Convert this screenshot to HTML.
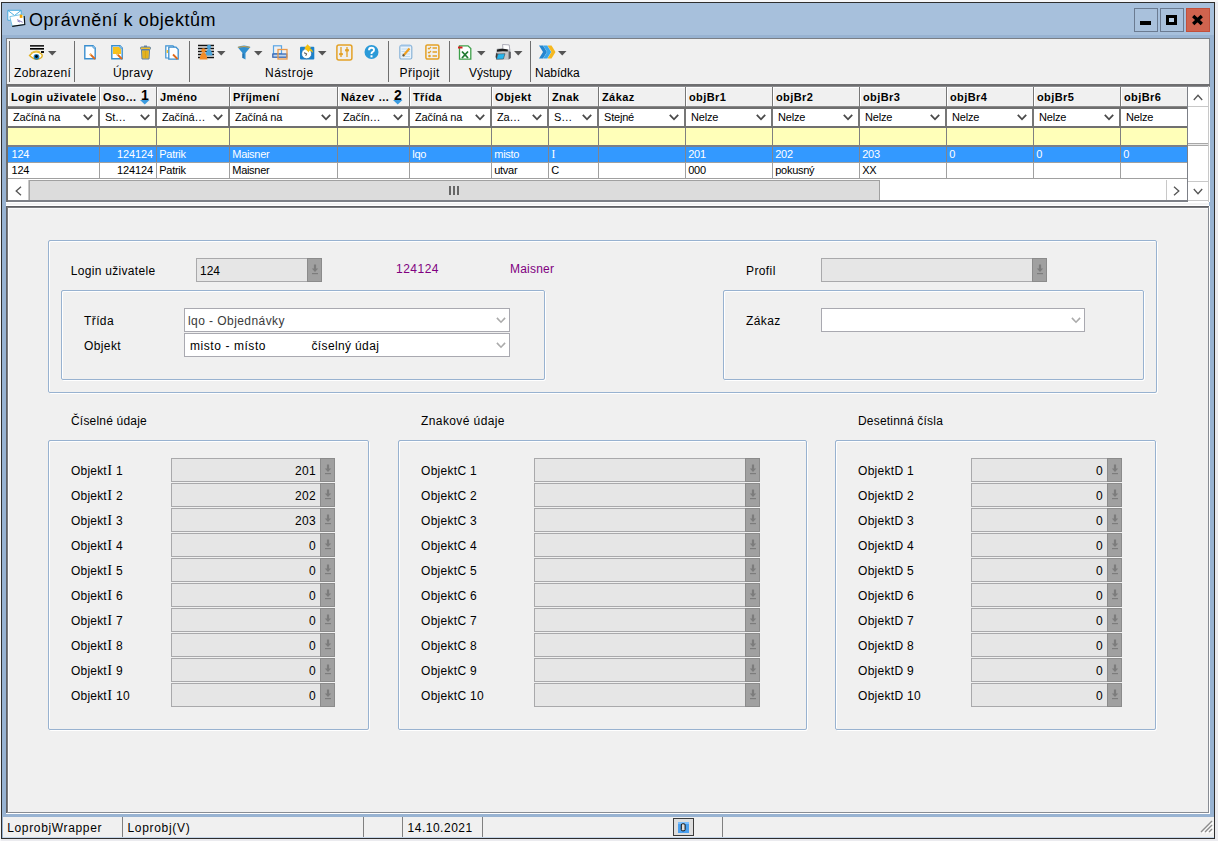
<!DOCTYPE html><html><head><meta charset="utf-8"><style>

*{box-sizing:border-box;margin:0;padding:0}
html,body{width:1218px;height:841px;overflow:hidden;background:#ebebef;font-family:"Liberation Sans",sans-serif;color:#000}
.abs{position:absolute}
.I{font-family:"Liberation Serif",serif;font-size:14.4px;padding:0 0.3px;line-height:0}
.t{position:absolute;white-space:nowrap;line-height:1}
svg{position:absolute;overflow:visible}

</style></head><body>
<div class="abs" style="left:0px;top:0px;width:1218px;height:2px;background:#f6f6f8"></div>
<div class="abs" style="left:0px;top:0px;width:1px;height:841px;background:#f6f6f8"></div>
<div class="abs" style="left:1px;top:2px;width:1214px;height:837px;background:#2e2e2e"></div>
<div class="abs" style="left:2px;top:3px;width:1212px;height:835px;background:#98b3d2"></div>
<div class="abs" style="left:2px;top:3px;width:1212px;height:32px;background:#a7c0dc"></div>
<svg style="left:0px;top:0px" width="30" height="30" viewBox="0 0 30 30">
<path d="M7.8 10.3 H21.2 V20.2 H7.8 Z" fill="#ffffff" stroke="#3aa6dc" stroke-width="0.9"/>
<path d="M8 10.5 L14.5 15.5 L21 10.5" fill="none" stroke="#3aa6dc" stroke-width="0.9"/>
<path d="M9.8 16.6 L23.7 14.1 L24.6 24.4 L12.2 26.2 Z" fill="#ffffff" stroke="#59b6e0" stroke-width="0.8"/>
<path d="M12.2 26.4 L24.8 24.6 L24.2 16" fill="none" stroke="#111" stroke-width="1.1"/>
<rect x="19.8" y="14.7" width="2.6" height="3.2" fill="#f5a400"/>
<path d="M17.2 19.6 L22.6 22.3 M17.5 21 L20 22" stroke="#8a7fc0" stroke-width="1"/>
</svg>
<div class="t" style="left:29px;top:10.76px;font-size:18px;letter-spacing:0.55px;color:#000">Oprávnění k objektům</div>
<div class="abs" style="left:1134px;top:8px;width:24px;height:24px;border:1px solid #6b7b91;background:#a9c1dc"></div>
<div class="abs" style="left:1140px;top:21px;width:11px;height:4px;background:#000"></div>
<div class="abs" style="left:1160px;top:8px;width:24px;height:24px;border:1px solid #6b7b91;background:#a9c1dc"></div>
<div class="abs" style="left:1166px;top:15px;width:11px;height:10px;border:3px solid #000;background:#b9cfe6"></div>
<div class="abs" style="left:1186px;top:8px;width:24px;height:24px;border:1px solid #c24f3b;background:#d0634e"></div>
<svg style="left:1192px;top:15px" width="11" height="10" viewBox="0 0 11 10">
<path d="M1.2 1 L9.8 9 M9.8 1 L1.2 9" stroke="#000" stroke-width="3.3" stroke-linecap="butt"/></svg>
<div class="abs" style="left:6px;top:38px;width:1204px;height:47px;background:#f0f0f0;border-left:1px solid #7a7f86;border-top:1px solid #7a7f86;border-right:1px solid #80858c"></div>
<div class="abs" style="left:6px;top:84px;width:1204px;height:2px;background:#6e6e70"></div>
<div class="abs" style="left:6px;top:86px;width:1204px;height:1px;background:#8a8b8e"></div>
<div class="abs" style="left:9px;top:41px;width:1px;height:41px;background:#6f6f6f"></div>
<div class="abs" style="left:74px;top:41px;width:1px;height:41px;background:#6f6f6f"></div>
<div class="abs" style="left:189px;top:41px;width:1px;height:41px;background:#6f6f6f"></div>
<div class="abs" style="left:388px;top:41px;width:1px;height:41px;background:#6f6f6f"></div>
<div class="abs" style="left:449px;top:41px;width:1px;height:41px;background:#6f6f6f"></div>
<div class="abs" style="left:530px;top:41px;width:1px;height:41px;background:#6f6f6f"></div>
<div class="t" style="left:14px;top:66.84px;font-size:12px;color:#000;letter-spacing:0.35px">Zobrazení</div>
<div class="t" style="left:113px;top:66.84px;font-size:12px;color:#000;letter-spacing:0.35px">Úpravy</div>
<div class="t" style="left:265px;top:66.84px;font-size:12px;color:#000;letter-spacing:0.5px">Nástroje</div>
<div class="t" style="left:399.5px;top:66.84px;font-size:12px;color:#000;letter-spacing:0.45px">Připojit</div>
<div class="t" style="left:469px;top:66.84px;font-size:12px;color:#000;letter-spacing:0px">Výstupy</div>
<div class="t" style="left:535px;top:66.84px;font-size:12px;color:#000;letter-spacing:0px">Nabídka</div>
<svg style="left:29px;top:44px" width="16" height="17" viewBox="0 0 16 17">
<rect x="1" y="1" width="14" height="1.7" fill="#222"/><rect x="1" y="4" width="14" height="1.6" fill="#000"/>
<rect x="12" y="7" width="3" height="2" fill="#111"/>
<path d="M0.5 11.5 Q6 5 12.5 10 Q14 11.5 12.5 13.5 Q7 18 0.5 11.5 Z" fill="#fff" stroke="#e0b020" stroke-width="1.3"/>
<path d="M2 9 Q7 6 11 8" fill="none" stroke="#e8c040" stroke-width="1.2"/>
<circle cx="7.5" cy="12.8" r="2.9" fill="#1f7fb8"/><circle cx="7.5" cy="12.5" r="1.4" fill="#000"/>
</svg>
<svg style="left:48px;top:51px" width="9" height="5" viewBox="0 0 9 5"><path d="M0 0 H8.5 L4.25 4.5 Z" fill="#555"/></svg>
<svg style="left:84px;top:45px" width="13" height="15" viewBox="0 0 13 15">
<path d="M0.8 0.8 H9 L11.2 3 V13.8 H0.8 Z" fill="#fff" stroke="#3a8fd0" stroke-width="1.4"/>
<path d="M9 0.8 V3 H11.2" fill="#d8ecfa" stroke="#3a8fd0" stroke-width="0.8"/>
<path d="M6 9 L11 14" stroke="#e06a1a" stroke-width="1.8"/><path d="M5.8 8.8 L7 10" stroke="#f7c070" stroke-width="1.8"/>
</svg>
<svg style="left:111px;top:45px" width="13" height="15" viewBox="0 0 13 15">
<path d="M0.8 0.8 H9 L11.2 3 V13.8 H0.8 Z" fill="#fff" stroke="#3a8fd0" stroke-width="1.4"/><path d="M2 2 H8 L10 4 V9 H2 Z" fill="#f7c21e"/>
<path d="M9 0.8 V3 H11.2" fill="#d8ecfa" stroke="#3a8fd0" stroke-width="0.8"/>
<path d="M6 9 L11 14" stroke="#e06a1a" stroke-width="1.8"/><path d="M5.8 8.8 L7 10" stroke="#f7c070" stroke-width="1.8"/>
</svg>
<svg style="left:140px;top:45px" width="11" height="15" viewBox="0 0 11 15">
<rect x="4" y="0.5" width="3" height="2" fill="#6a86a6"/>
<rect x="0.5" y="2" width="10" height="2.5" rx="1" fill="#f2c02a" stroke="#5a7ea6" stroke-width="1"/>
<path d="M1.5 5 H9.5 L9 14 H2 Z" fill="#f2c02a" stroke="#5a7ea6" stroke-width="1"/>
<path d="M4 6 V13 M5.5 6 V13 M7 6 V13" stroke="#c99a10" stroke-width="0.7"/>
</svg>
<svg style="left:165px;top:45px" width="14" height="15" viewBox="0 0 14 15">
<path d="M0.8 0.8 H8 L9 2 V13 H0.8 Z" fill="#fff" stroke="#3a8fd0" stroke-width="1.2"/>
<rect x="1.6" y="5" width="1.5" height="3" fill="#f5c030"/>
<path d="M3.8 2.2 H11 L13.2 4.4 V14.2 H3.8 Z" fill="#fff" stroke="#3a8fd0" stroke-width="1.3"/>
<path d="M8 9.5 L12.5 14" stroke="#e06a1a" stroke-width="1.8"/>
</svg>
<svg style="left:198px;top:44px" width="17" height="16" viewBox="0 0 17 16">
<path d="M0 1.5 H16 M0 4.5 H16 M0 7.5 H16 M0 10.5 H16 M0 13.5 H16" stroke="#111" stroke-width="1.3"/>
<circle cx="11" cy="3" r="2.2" fill="#4aa4dc"/><path d="M7.5 11.5 Q8.5 5 11 5 Q13.5 5 14.5 11.5 Z" fill="#4aa4dc"/>
<circle cx="5.5" cy="6.5" r="2.2" fill="#f28c28"/><path d="M1.5 15.5 Q2.5 8.5 5.5 8.5 Q8.5 8.5 9.5 15.5 Z" fill="#f28c28"/>
</svg>
<svg style="left:217px;top:51px" width="9" height="5" viewBox="0 0 9 5"><path d="M0 0 H8.5 L4.25 4.5 Z" fill="#555"/></svg>
<svg style="left:237px;top:45px" width="14" height="15" viewBox="0 0 14 15">
<path d="M0.5 2 Q7 -1 13.5 2 L8.5 8 V14.5 L5.5 13 V8 Z" fill="#2f8fd0"/>
<path d="M1 2.3 Q7 0.8 13 2.3" stroke="#d8a040" stroke-width="1" fill="none"/>
<path d="M6 8.5 V13" stroke="#1a5f9a" stroke-width="1"/>
</svg>
<svg style="left:254px;top:51px" width="9" height="5" viewBox="0 0 9 5"><path d="M0 0 H8.5 L4.25 4.5 Z" fill="#555"/></svg>
<svg style="left:272px;top:45px" width="16" height="15" viewBox="0 0 16 15">
<rect x="1.5" y="0.8" width="8" height="8" fill="none" stroke="#5aa6e6" stroke-width="1.2"/>
<rect x="0.8" y="9" width="14" height="3.2" fill="#bcd6f0" stroke="#2f5fb0" stroke-width="1.2"/>
<rect x="6" y="4.5" width="9" height="9.5" fill="none" stroke="#ea9a4a" stroke-width="1.3"/>
</svg>
<svg style="left:300px;top:44px" width="15" height="16" viewBox="0 0 15 16">
<rect x="0" y="2.8" width="14.3" height="12.8" rx="1" fill="#1c82cc"/>
<circle cx="6.6" cy="9.7" r="5" fill="#ffffff"/><circle cx="6.6" cy="9.7" r="5" fill="none" stroke="#0d5f9e" stroke-width="0.6"/>
<path d="M6.6 9.7 L4 8.8 M6.6 9.7 L5.8 11.8" stroke="#333" stroke-width="0.9"/>
<path d="M7.5 0.2 L11.2 4 H9.4 Q12.6 5 13 8.8 Q11.2 6.6 9 6.4 V8.6 L4.4 4.3 Z" fill="#f7c10e"/>
</svg>
<svg style="left:318px;top:51px" width="9" height="5" viewBox="0 0 9 5"><path d="M0 0 H8.5 L4.25 4.5 Z" fill="#555"/></svg>
<svg style="left:336px;top:44px" width="17" height="17" viewBox="0 0 17 17">
<rect x="0.9" y="0.9" width="15" height="15" rx="2" fill="none" stroke="#e3a126" stroke-width="1.5"/>
<path d="M5 3 V13 M11 3 V13" stroke="#e3a126" stroke-width="1.3"/>
<rect x="3" y="9" width="4" height="2.2" rx="1" fill="#e3a126"/><rect x="9" y="5" width="4" height="2.6" rx="1" fill="#e3a126"/>
</svg>
<svg style="left:364px;top:45px" width="15" height="15" viewBox="0 0 15 15">
<circle cx="7.5" cy="7" r="7" fill="#2b9ad8"/>
<path d="M5 5.3 Q5 2.8 7.5 2.8 Q10 2.8 10 5 Q10 6.5 8.3 7.2 Q7.5 7.6 7.5 9" fill="none" stroke="#fff" stroke-width="1.9"/>
<rect x="6.5" y="10.3" width="2" height="2" fill="#fff"/>
</svg>
<svg style="left:399px;top:44px" width="14" height="16" viewBox="0 0 14 16">
<rect x="0.8" y="1.5" width="12" height="13.5" rx="1.5" fill="#eaf3fb" stroke="#8ab4d8" stroke-width="1.2"/>
<path d="M2.5 5 H11 M2.5 7.5 H11 M2.5 10 H11 M2.5 12.5 H11" stroke="#b8d4ec" stroke-width="0.8"/>
<rect x="2" y="0.5" width="9.5" height="2" fill="#9cc2e6"/>
<path d="M4 12 L10.5 4.5" stroke="#f0a020" stroke-width="2.2"/><path d="M4 12 L5 10.5" stroke="#555" stroke-width="2"/>
</svg>
<svg style="left:425px;top:44px" width="15" height="16" viewBox="0 0 15 16">
<rect x="0.9" y="0.9" width="13" height="14.2" rx="1.5" fill="none" stroke="#e3a126" stroke-width="1.5"/>
<path d="M3 4 L4 5 L6 3 M3 8 L4 9 L6 7" stroke="#e3a126" stroke-width="1.1" fill="none"/>
<path d="M7.5 4 H12 M7.5 8 H12 M7.5 12 H12" stroke="#e3a126" stroke-width="1.4"/><circle cx="4.5" cy="12" r="1.3" fill="#e3a126"/>
</svg>
<svg style="left:458px;top:45px" width="14" height="15" viewBox="0 0 14 15">
<path d="M1.5 0.8 H10 L12.8 3.5 V14.2 H1.5 Z" fill="#fff" stroke="#3ea04a" stroke-width="1.3"/>
<rect x="0" y="1.5" width="4.5" height="2" fill="#d42020"/>
<path d="M4 6.5 L10 13 M10 6.5 L4 13" stroke="#1f7a30" stroke-width="1.8"/>
</svg>
<svg style="left:477px;top:51px" width="9" height="5" viewBox="0 0 9 5"><path d="M0 0 H8.5 L4.25 4.5 Z" fill="#555"/></svg>
<svg style="left:495px;top:44px" width="17" height="16" viewBox="0 0 17 16">
<path d="M1 6.5 Q1 4.6 3 4.3 L12.5 4 Q15.6 4.4 15.8 8 V13.5 Q15.6 15.6 13 15.7 H3 Q0.5 15.5 0.5 13 Z" fill="#c4c6c9"/>
<path d="M7.6 0.5 L14.2 0.9 L14.8 6 L8 6 Z" fill="#ffffff" stroke="#9a9aa8" stroke-width="0.8"/>
<path d="M2 5.6 Q7 4.2 12.8 5.4 L12.8 7.6 Q7 6.6 2 7.8 Z" fill="#1e1e1e"/>
<path d="M13.6 7 L15.8 8 V14 L13.6 15.6 Z" fill="#5a5c60"/>
<path d="M1.2 9 L3 9.8 L1.6 15.4 L0.6 13 Z" fill="#3a3a3a"/>
<path d="M3 9.9 L10 9.7 L8.4 15 L1.4 15.3 Z" fill="#27b6ee" stroke="#3a3a3a" stroke-width="0.5"/>
</svg>
<svg style="left:514px;top:51px" width="9" height="5" viewBox="0 0 9 5"><path d="M0 0 H8.5 L4.25 4.5 Z" fill="#555"/></svg>
<svg style="left:539px;top:45px" width="17" height="14" viewBox="0 0 17 14">
<path d="M8.5 0.5 H12.5 L16.5 7 L12.5 13.5 H8.5 L12.5 7 Z" fill="#f5b820"/>
<path d="M4.2 0.5 H8.2 L12.2 7 L8.2 13.5 H4.2 L8.2 7 Z" fill="#3aa6ea"/>
<path d="M0 0.5 H4 L8 7 L4 13.5 H0 L4 7 Z" fill="#2586d0"/>
</svg>
<svg style="left:558px;top:51px" width="9" height="5" viewBox="0 0 9 5"><path d="M0 0 H8.5 L4.25 4.5 Z" fill="#555"/></svg>
<div class="abs" style="left:6px;top:87px;width:1204px;height:115px;background:#ffffff"></div>
<div class="abs" style="left:6px;top:86px;width:2px;height:116px;background:#6d6d6d"></div>
<div class="abs" style="left:8px;top:87px;width:1180px;height:1px;background:#ffffff"></div>
<div class="abs" style="left:8px;top:88px;width:1180px;height:18px;background:#f0f0f0"></div>
<div class="abs" style="left:8px;top:106px;width:1180px;height:1px;background:#8a8a8a"></div>
<div class="abs" style="left:8px;top:107px;width:1180px;height:2px;background:#6e6e6e"></div>
<div class="abs" style="left:99px;top:87px;width:1px;height:20px;background:#777"></div>
<div class="abs" style="left:8px;top:87px;width:1px;height:19px;background:#fff"></div>
<div class="t" style="left:11px;top:91.69px;font-size:11px;font-weight:bold;letter-spacing:0.4px">Login uživatele</div>
<div class="abs" style="left:156px;top:87px;width:1px;height:20px;background:#777"></div>
<div class="abs" style="left:100px;top:87px;width:1px;height:19px;background:#fff"></div>
<div class="t" style="left:103px;top:91.69px;font-size:11px;font-weight:bold;letter-spacing:0.4px">Oso…</div>
<div class="abs" style="left:229px;top:87px;width:1px;height:20px;background:#777"></div>
<div class="abs" style="left:157px;top:87px;width:1px;height:19px;background:#fff"></div>
<div class="t" style="left:160px;top:91.69px;font-size:11px;font-weight:bold;letter-spacing:0.4px">Jméno</div>
<div class="abs" style="left:337px;top:87px;width:1px;height:20px;background:#777"></div>
<div class="abs" style="left:230px;top:87px;width:1px;height:19px;background:#fff"></div>
<div class="t" style="left:233px;top:91.69px;font-size:11px;font-weight:bold;letter-spacing:0.4px">Příjmení</div>
<div class="abs" style="left:409px;top:87px;width:1px;height:20px;background:#777"></div>
<div class="abs" style="left:338px;top:87px;width:1px;height:19px;background:#fff"></div>
<div class="t" style="left:341px;top:91.69px;font-size:11px;font-weight:bold;letter-spacing:0.4px">Název …</div>
<div class="abs" style="left:491px;top:87px;width:1px;height:20px;background:#777"></div>
<div class="abs" style="left:410px;top:87px;width:1px;height:19px;background:#fff"></div>
<div class="t" style="left:413px;top:91.69px;font-size:11px;font-weight:bold;letter-spacing:0.4px">Třída</div>
<div class="abs" style="left:548px;top:87px;width:1px;height:20px;background:#777"></div>
<div class="abs" style="left:492px;top:87px;width:1px;height:19px;background:#fff"></div>
<div class="t" style="left:495px;top:91.69px;font-size:11px;font-weight:bold;letter-spacing:0.4px">Objekt</div>
<div class="abs" style="left:598px;top:87px;width:1px;height:20px;background:#777"></div>
<div class="abs" style="left:549px;top:87px;width:1px;height:19px;background:#fff"></div>
<div class="t" style="left:552px;top:91.69px;font-size:11px;font-weight:bold;letter-spacing:0.4px">Znak</div>
<div class="abs" style="left:685px;top:87px;width:1px;height:20px;background:#777"></div>
<div class="abs" style="left:599px;top:87px;width:1px;height:19px;background:#fff"></div>
<div class="t" style="left:602px;top:91.69px;font-size:11px;font-weight:bold;letter-spacing:0.4px">Zákaz</div>
<div class="abs" style="left:772px;top:87px;width:1px;height:20px;background:#777"></div>
<div class="abs" style="left:686px;top:87px;width:1px;height:19px;background:#fff"></div>
<div class="t" style="left:689px;top:91.69px;font-size:11px;font-weight:bold;letter-spacing:0.4px">objBr1</div>
<div class="abs" style="left:859px;top:87px;width:1px;height:20px;background:#777"></div>
<div class="abs" style="left:773px;top:87px;width:1px;height:19px;background:#fff"></div>
<div class="t" style="left:776px;top:91.69px;font-size:11px;font-weight:bold;letter-spacing:0.4px">objBr2</div>
<div class="abs" style="left:946px;top:87px;width:1px;height:20px;background:#777"></div>
<div class="abs" style="left:860px;top:87px;width:1px;height:19px;background:#fff"></div>
<div class="t" style="left:863px;top:91.69px;font-size:11px;font-weight:bold;letter-spacing:0.4px">objBr3</div>
<div class="abs" style="left:1033px;top:87px;width:1px;height:20px;background:#777"></div>
<div class="abs" style="left:947px;top:87px;width:1px;height:19px;background:#fff"></div>
<div class="t" style="left:950px;top:91.69px;font-size:11px;font-weight:bold;letter-spacing:0.4px">objBr4</div>
<div class="abs" style="left:1120px;top:87px;width:1px;height:20px;background:#777"></div>
<div class="abs" style="left:1034px;top:87px;width:1px;height:19px;background:#fff"></div>
<div class="t" style="left:1037px;top:91.69px;font-size:11px;font-weight:bold;letter-spacing:0.4px">objBr5</div>
<div class="abs" style="left:1187px;top:87px;width:1px;height:20px;background:#777"></div>
<div class="abs" style="left:1121px;top:87px;width:1px;height:19px;background:#fff"></div>
<div class="t" style="left:1124px;top:91.69px;font-size:11px;font-weight:bold;letter-spacing:0.4px">objBr6</div>
<div class="t" style="left:141px;top:88.15px;font-size:14px;font-weight:bold;">1</div>
<svg style="left:140px;top:100px" width="10" height="5" viewBox="0 0 10 5"><path d="M0 0 H9.5 L4.75 4.5 Z" fill="#3a9be0"/></svg>
<div class="t" style="left:394px;top:88.15px;font-size:14px;font-weight:bold;">2</div>
<svg style="left:393px;top:100px" width="10" height="5" viewBox="0 0 10 5"><path d="M0 0 H9.5 L4.75 4.5 Z" fill="#3a9be0"/></svg>
<div class="abs" style="left:8px;top:109px;width:1180px;height:17px;background:#fff"></div>
<div class="abs" style="left:8px;top:126px;width:1180px;height:2px;background:#707070"></div>
<div class="abs" style="left:98px;top:109px;width:2px;height:17px;background:#777"></div>
<div class="t" style="left:13px;top:111.69px;font-size:11px;letter-spacing:-0.2px;color:#000">Začíná na</div>
<svg style="left:83px;top:114px" width="10" height="7" viewBox="0 0 10 7"><path d="M0.8 0.8 L5 5.3 L9.2 0.8" fill="none" stroke="#4a4a4a" stroke-width="1.8"/></svg>
<div class="abs" style="left:155px;top:109px;width:2px;height:17px;background:#777"></div>
<div class="t" style="left:105px;top:111.69px;font-size:11px;letter-spacing:-0.2px;color:#000">St…</div>
<svg style="left:140px;top:114px" width="10" height="7" viewBox="0 0 10 7"><path d="M0.8 0.8 L5 5.3 L9.2 0.8" fill="none" stroke="#4a4a4a" stroke-width="1.8"/></svg>
<div class="abs" style="left:228px;top:109px;width:2px;height:17px;background:#777"></div>
<div class="t" style="left:162px;top:111.69px;font-size:11px;letter-spacing:-0.2px;color:#000">Začíná…</div>
<svg style="left:213px;top:114px" width="10" height="7" viewBox="0 0 10 7"><path d="M0.8 0.8 L5 5.3 L9.2 0.8" fill="none" stroke="#4a4a4a" stroke-width="1.8"/></svg>
<div class="abs" style="left:336px;top:109px;width:2px;height:17px;background:#777"></div>
<div class="t" style="left:235px;top:111.69px;font-size:11px;letter-spacing:-0.2px;color:#000">Začíná na</div>
<svg style="left:321px;top:114px" width="10" height="7" viewBox="0 0 10 7"><path d="M0.8 0.8 L5 5.3 L9.2 0.8" fill="none" stroke="#4a4a4a" stroke-width="1.8"/></svg>
<div class="abs" style="left:408px;top:109px;width:2px;height:17px;background:#777"></div>
<div class="t" style="left:343px;top:111.69px;font-size:11px;letter-spacing:-0.2px;color:#000">Začín…</div>
<svg style="left:393px;top:114px" width="10" height="7" viewBox="0 0 10 7"><path d="M0.8 0.8 L5 5.3 L9.2 0.8" fill="none" stroke="#4a4a4a" stroke-width="1.8"/></svg>
<div class="abs" style="left:490px;top:109px;width:2px;height:17px;background:#777"></div>
<div class="t" style="left:415px;top:111.69px;font-size:11px;letter-spacing:-0.2px;color:#000">Začíná na</div>
<svg style="left:475px;top:114px" width="10" height="7" viewBox="0 0 10 7"><path d="M0.8 0.8 L5 5.3 L9.2 0.8" fill="none" stroke="#4a4a4a" stroke-width="1.8"/></svg>
<div class="abs" style="left:547px;top:109px;width:2px;height:17px;background:#777"></div>
<div class="t" style="left:497px;top:111.69px;font-size:11px;letter-spacing:-0.2px;color:#000">Za…</div>
<svg style="left:532px;top:114px" width="10" height="7" viewBox="0 0 10 7"><path d="M0.8 0.8 L5 5.3 L9.2 0.8" fill="none" stroke="#4a4a4a" stroke-width="1.8"/></svg>
<div class="abs" style="left:597px;top:109px;width:2px;height:17px;background:#777"></div>
<div class="t" style="left:554px;top:111.69px;font-size:11px;letter-spacing:-0.2px;color:#000">S…</div>
<svg style="left:582px;top:114px" width="10" height="7" viewBox="0 0 10 7"><path d="M0.8 0.8 L5 5.3 L9.2 0.8" fill="none" stroke="#4a4a4a" stroke-width="1.8"/></svg>
<div class="abs" style="left:684px;top:109px;width:2px;height:17px;background:#777"></div>
<div class="t" style="left:604px;top:111.69px;font-size:11px;letter-spacing:-0.2px;color:#000">Stejné</div>
<svg style="left:669px;top:114px" width="10" height="7" viewBox="0 0 10 7"><path d="M0.8 0.8 L5 5.3 L9.2 0.8" fill="none" stroke="#4a4a4a" stroke-width="1.8"/></svg>
<div class="abs" style="left:771px;top:109px;width:2px;height:17px;background:#777"></div>
<div class="t" style="left:691px;top:111.69px;font-size:11px;letter-spacing:-0.2px;color:#000">Nelze</div>
<svg style="left:756px;top:114px" width="10" height="7" viewBox="0 0 10 7"><path d="M0.8 0.8 L5 5.3 L9.2 0.8" fill="none" stroke="#4a4a4a" stroke-width="1.8"/></svg>
<div class="abs" style="left:858px;top:109px;width:2px;height:17px;background:#777"></div>
<div class="t" style="left:778px;top:111.69px;font-size:11px;letter-spacing:-0.2px;color:#000">Nelze</div>
<svg style="left:843px;top:114px" width="10" height="7" viewBox="0 0 10 7"><path d="M0.8 0.8 L5 5.3 L9.2 0.8" fill="none" stroke="#4a4a4a" stroke-width="1.8"/></svg>
<div class="abs" style="left:945px;top:109px;width:2px;height:17px;background:#777"></div>
<div class="t" style="left:865px;top:111.69px;font-size:11px;letter-spacing:-0.2px;color:#000">Nelze</div>
<svg style="left:930px;top:114px" width="10" height="7" viewBox="0 0 10 7"><path d="M0.8 0.8 L5 5.3 L9.2 0.8" fill="none" stroke="#4a4a4a" stroke-width="1.8"/></svg>
<div class="abs" style="left:1032px;top:109px;width:2px;height:17px;background:#777"></div>
<div class="t" style="left:952px;top:111.69px;font-size:11px;letter-spacing:-0.2px;color:#000">Nelze</div>
<svg style="left:1017px;top:114px" width="10" height="7" viewBox="0 0 10 7"><path d="M0.8 0.8 L5 5.3 L9.2 0.8" fill="none" stroke="#4a4a4a" stroke-width="1.8"/></svg>
<div class="abs" style="left:1119px;top:109px;width:2px;height:17px;background:#777"></div>
<div class="t" style="left:1039px;top:111.69px;font-size:11px;letter-spacing:-0.2px;color:#000">Nelze</div>
<svg style="left:1104px;top:114px" width="10" height="7" viewBox="0 0 10 7"><path d="M0.8 0.8 L5 5.3 L9.2 0.8" fill="none" stroke="#4a4a4a" stroke-width="1.8"/></svg>
<div class="abs" style="left:1187px;top:109px;width:2px;height:17px;background:#777"></div>
<div class="t" style="left:1126px;top:111.69px;font-size:11px;letter-spacing:-0.2px;color:#000">Nelze</div>
<div class="abs" style="left:8px;top:128px;width:1180px;height:17px;background:#ffffb9"></div>
<div class="abs" style="left:8px;top:145px;width:1180px;height:2px;background:#7b7f88"></div>
<div class="abs" style="left:99px;top:128px;width:1px;height:17px;background:#808080"></div>
<div class="abs" style="left:156px;top:128px;width:1px;height:17px;background:#808080"></div>
<div class="abs" style="left:229px;top:128px;width:1px;height:17px;background:#808080"></div>
<div class="abs" style="left:337px;top:128px;width:1px;height:17px;background:#808080"></div>
<div class="abs" style="left:409px;top:128px;width:1px;height:17px;background:#808080"></div>
<div class="abs" style="left:491px;top:128px;width:1px;height:17px;background:#808080"></div>
<div class="abs" style="left:548px;top:128px;width:1px;height:17px;background:#808080"></div>
<div class="abs" style="left:598px;top:128px;width:1px;height:17px;background:#808080"></div>
<div class="abs" style="left:685px;top:128px;width:1px;height:17px;background:#808080"></div>
<div class="abs" style="left:772px;top:128px;width:1px;height:17px;background:#808080"></div>
<div class="abs" style="left:859px;top:128px;width:1px;height:17px;background:#808080"></div>
<div class="abs" style="left:946px;top:128px;width:1px;height:17px;background:#808080"></div>
<div class="abs" style="left:1033px;top:128px;width:1px;height:17px;background:#808080"></div>
<div class="abs" style="left:1120px;top:128px;width:1px;height:17px;background:#808080"></div>
<div class="abs" style="left:1187px;top:128px;width:1px;height:17px;background:#808080"></div>
<div class="abs" style="left:8px;top:147px;width:1180px;height:15px;background:#3399ff"></div>
<div class="abs" style="left:8px;top:162px;width:1180px;height:1px;background:#a0a0a0"></div>
<div class="abs" style="left:99px;top:147px;width:1px;height:15px;background:#7d8590"></div>
<div class="abs" style="left:156px;top:147px;width:1px;height:15px;background:#7d8590"></div>
<div class="abs" style="left:229px;top:147px;width:1px;height:15px;background:#7d8590"></div>
<div class="abs" style="left:337px;top:147px;width:1px;height:15px;background:#7d8590"></div>
<div class="abs" style="left:409px;top:147px;width:1px;height:15px;background:#7d8590"></div>
<div class="abs" style="left:491px;top:147px;width:1px;height:15px;background:#7d8590"></div>
<div class="abs" style="left:548px;top:147px;width:1px;height:15px;background:#7d8590"></div>
<div class="abs" style="left:598px;top:147px;width:1px;height:15px;background:#7d8590"></div>
<div class="abs" style="left:685px;top:147px;width:1px;height:15px;background:#7d8590"></div>
<div class="abs" style="left:772px;top:147px;width:1px;height:15px;background:#7d8590"></div>
<div class="abs" style="left:859px;top:147px;width:1px;height:15px;background:#7d8590"></div>
<div class="abs" style="left:946px;top:147px;width:1px;height:15px;background:#7d8590"></div>
<div class="abs" style="left:1033px;top:147px;width:1px;height:15px;background:#7d8590"></div>
<div class="abs" style="left:1120px;top:147px;width:1px;height:15px;background:#7d8590"></div>
<div class="abs" style="left:1187px;top:147px;width:1px;height:15px;background:#7d8590"></div>
<div class="abs" style="left:8px;top:178px;width:1180px;height:1px;background:#a0a0a0"></div>
<div class="abs" style="left:99px;top:163px;width:1px;height:15px;background:#a0a0a0"></div>
<div class="abs" style="left:156px;top:163px;width:1px;height:15px;background:#a0a0a0"></div>
<div class="abs" style="left:229px;top:163px;width:1px;height:15px;background:#a0a0a0"></div>
<div class="abs" style="left:337px;top:163px;width:1px;height:15px;background:#a0a0a0"></div>
<div class="abs" style="left:409px;top:163px;width:1px;height:15px;background:#a0a0a0"></div>
<div class="abs" style="left:491px;top:163px;width:1px;height:15px;background:#a0a0a0"></div>
<div class="abs" style="left:548px;top:163px;width:1px;height:15px;background:#a0a0a0"></div>
<div class="abs" style="left:598px;top:163px;width:1px;height:15px;background:#a0a0a0"></div>
<div class="abs" style="left:685px;top:163px;width:1px;height:15px;background:#a0a0a0"></div>
<div class="abs" style="left:772px;top:163px;width:1px;height:15px;background:#a0a0a0"></div>
<div class="abs" style="left:859px;top:163px;width:1px;height:15px;background:#a0a0a0"></div>
<div class="abs" style="left:946px;top:163px;width:1px;height:15px;background:#a0a0a0"></div>
<div class="abs" style="left:1033px;top:163px;width:1px;height:15px;background:#a0a0a0"></div>
<div class="abs" style="left:1120px;top:163px;width:1px;height:15px;background:#a0a0a0"></div>
<div class="abs" style="left:1187px;top:163px;width:1px;height:15px;background:#a0a0a0"></div>
<div class="t" style="left:11.6px;top:148.69px;font-size:11px;color:#fff;letter-spacing:-0.3px">124</div>
<div class="t" style="left:11.6px;top:164.69px;font-size:11px;color:#000;letter-spacing:-0.3px">124</div>
<div class="t" style="right:1065px;top:148.69px;font-size:11px;color:#fff;letter-spacing:-0.1px">124124</div>
<div class="t" style="right:1065px;top:164.69px;font-size:11px;color:#000;letter-spacing:-0.1px">124124</div>
<div class="t" style="left:159.3px;top:148.69px;font-size:11px;color:#fff;letter-spacing:-0.3px">Patrik</div>
<div class="t" style="left:159.3px;top:164.69px;font-size:11px;color:#000;letter-spacing:-0.3px">Patrik</div>
<div class="t" style="left:232.3px;top:148.69px;font-size:11px;color:#fff;letter-spacing:-0.3px">Maisner</div>
<div class="t" style="left:232.3px;top:164.69px;font-size:11px;color:#000;letter-spacing:-0.3px">Maisner</div>
<div class="t" style="left:412.3px;top:148.69px;font-size:11px;color:#fff;letter-spacing:-0.3px">lqo</div>
<div class="t" style="left:494.3px;top:148.69px;font-size:11px;color:#fff;letter-spacing:-0.3px">misto</div>
<div class="t" style="left:494.3px;top:164.69px;font-size:11px;color:#000;letter-spacing:-0.3px">utvar</div>
<div class="t" style="left:551.3px;top:148.69px;font-size:11px;color:#fff;letter-spacing:-0.3px"><span class=I style="font-size:11.5px">I</span></div>
<div class="t" style="left:551.3px;top:164.69px;font-size:11px;color:#000;letter-spacing:-0.3px">C</div>
<div class="t" style="left:688.3px;top:148.69px;font-size:11px;color:#fff;letter-spacing:-0.3px">201</div>
<div class="t" style="left:688.3px;top:164.69px;font-size:11px;color:#000;letter-spacing:-0.3px">000</div>
<div class="t" style="left:775.3px;top:148.69px;font-size:11px;color:#fff;letter-spacing:-0.3px">202</div>
<div class="t" style="left:775.3px;top:164.69px;font-size:11px;color:#000;letter-spacing:-0.3px">pokusný</div>
<div class="t" style="left:862.3px;top:148.69px;font-size:11px;color:#fff;letter-spacing:-0.3px">203</div>
<div class="t" style="left:862.3px;top:164.69px;font-size:11px;color:#000;letter-spacing:-0.3px">XX</div>
<div class="t" style="left:949.3px;top:148.69px;font-size:11px;color:#fff;letter-spacing:-0.3px">0</div>
<div class="t" style="left:1036.3px;top:148.69px;font-size:11px;color:#fff;letter-spacing:-0.3px">0</div>
<div class="t" style="left:1123.3px;top:148.69px;font-size:11px;color:#fff;letter-spacing:-0.3px">0</div>
<div class="abs" style="left:8px;top:179px;width:1180px;height:1px;background:#ffffff"></div>
<div class="abs" style="left:8px;top:180px;width:1180px;height:21px;background:#ffffff"></div>
<div class="abs" style="left:29px;top:180px;width:851px;height:21px;background:#dcdcdc;border:1px solid #a0a0a0;border-bottom:0"></div>
<div class="abs" style="left:28px;top:180px;width:1px;height:21px;background:#c8c8c8"></div>
<div class="abs" style="left:1166px;top:180px;width:1px;height:21px;background:#c8c8c8"></div>
<div class="abs" style="left:8px;top:200px;width:1180px;height:2px;background:#7d8087"></div>
<div class="abs" style="left:449px;top:186px;width:2px;height:9px;background:#666"></div>
<div class="abs" style="left:453px;top:186px;width:2px;height:9px;background:#666"></div>
<div class="abs" style="left:457px;top:186px;width:2px;height:9px;background:#666"></div>
<svg style="left:15px;top:186px" width="7" height="10" viewBox="0 0 7 10"><path d="M6 0.8 L1.2 5 L6 9.2" fill="none" stroke="#555" stroke-width="1.3"/></svg>
<svg style="left:1173px;top:186px" width="7" height="10" viewBox="0 0 7 10"><path d="M1 0.8 L5.8 5 L1 9.2" fill="none" stroke="#555" stroke-width="1.3"/></svg>
<div class="abs" style="left:1187px;top:86px;width:1px;height:116px;background:#7d8087"></div>
<div class="abs" style="left:1188px;top:87px;width:20px;height:114px;background:#ffffff"></div>
<div class="abs" style="left:1208px;top:86px;width:1px;height:116px;background:#c8c8c8"></div>
<div class="abs" style="left:1188px;top:106px;width:20px;height:1px;background:#c8c8c8"></div>
<div class="abs" style="left:1188px;top:181px;width:20px;height:1px;background:#c8c8c8"></div>
<div class="abs" style="left:1188px;top:143px;width:20px;height:1px;background:#a8a8a8"></div>
<div class="abs" style="left:1188px;top:145px;width:20px;height:1px;background:#a8a8a8"></div>
<div class="abs" style="left:1188px;top:144px;width:20px;height:1px;background:#e8e8e8"></div>
<div class="abs" style="left:1188px;top:200px;width:21px;height:1px;background:#c8c8c8"></div>
<svg style="left:1193px;top:94px" width="10" height="7" viewBox="0 0 10 7"><path d="M0.8 6 L5 1.2 L9.2 6" fill="none" stroke="#555" stroke-width="1.3"/></svg>
<svg style="left:1193px;top:188px" width="10" height="7" viewBox="0 0 10 7"><path d="M0.8 1 L5 5.8 L9.2 1" fill="none" stroke="#555" stroke-width="1.3"/></svg>
<div class="abs" style="left:6px;top:202px;width:1203px;height:4px;background:#f4f4f4"></div>
<div class="abs" style="left:6px;top:202px;width:1203px;height:1px;background:#ffffff"></div>
<div class="abs" style="left:6px;top:205px;width:1203px;height:1px;background:#ffffff"></div>
<div class="abs" style="left:6px;top:206px;width:1203px;height:607px;background:#f0f0f0"></div>
<div class="abs" style="left:6px;top:206px;width:1203px;height:1px;background:#5f6064"></div>
<div class="abs" style="left:6px;top:207px;width:1202px;height:1px;background:#7a7b7e"></div>
<div class="abs" style="left:6px;top:206px;width:1px;height:607px;background:#5f6064"></div>
<div class="abs" style="left:7px;top:207px;width:1px;height:605px;background:#7a7b7e"></div>
<div class="abs" style="left:8px;top:208px;width:1200px;height:1px;background:#fafafa"></div>
<div class="abs" style="left:8px;top:208px;width:1px;height:604px;background:#fafafa"></div>
<div class="abs" style="left:1208px;top:207px;width:1px;height:606px;background:#888c93"></div>
<div class="abs" style="left:1209px;top:206px;width:1px;height:608px;background:#ffffff"></div>
<div class="abs" style="left:7px;top:812px;width:1202px;height:1px;background:#888c93"></div>
<div class="abs" style="left:6px;top:813px;width:1204px;height:1px;background:#ffffff"></div>
<div class="abs" style="left:49px;top:241px;width:1109px;height:153px;border:1px solid #ffffff;border-radius:2px"></div>
<div class="abs" style="left:48px;top:240px;width:1109px;height:153px;border:1px solid #98b2d0;border-radius:2px"></div>
<div class="abs" style="left:62px;top:291px;width:484px;height:90px;border:1px solid #ffffff;border-radius:2px"></div>
<div class="abs" style="left:61px;top:290px;width:484px;height:90px;border:1px solid #98b2d0;border-radius:2px"></div>
<div class="abs" style="left:724px;top:291px;width:421px;height:90px;border:1px solid #ffffff;border-radius:2px"></div>
<div class="abs" style="left:723px;top:290px;width:421px;height:90px;border:1px solid #98b2d0;border-radius:2px"></div>
<div class="abs" style="left:49px;top:441px;width:321px;height:290px;border:1px solid #ffffff;border-radius:2px"></div>
<div class="abs" style="left:48px;top:440px;width:321px;height:290px;border:1px solid #98b2d0;border-radius:2px"></div>
<div class="abs" style="left:399px;top:441px;width:409px;height:290px;border:1px solid #ffffff;border-radius:2px"></div>
<div class="abs" style="left:398px;top:440px;width:409px;height:290px;border:1px solid #98b2d0;border-radius:2px"></div>
<div class="abs" style="left:836px;top:441px;width:321px;height:290px;border:1px solid #ffffff;border-radius:2px"></div>
<div class="abs" style="left:835px;top:440px;width:321px;height:290px;border:1px solid #98b2d0;border-radius:2px"></div>
<div class="t" style="left:70.8px;top:264.84px;font-size:12px;letter-spacing:0.3px">Login uživatele</div>
<div class="abs" style="left:196px;top:258px;width:126px;height:24px;background:#e6e6e6;border:1px solid #a9a9ab"></div>
<div class="abs" style="left:307px;top:258px;width:15px;height:24px;background:#a0a0a0;border:1px solid #8b8b8b"></div>
<svg style="left:311px;top:264px" width="8" height="11" viewBox="0 0 8 11"><path d="M4 0.5 V6" stroke="#7c7c7c" stroke-width="2.2"/><path d="M0.8 4.5 H7.2 L4 8 Z" fill="#7c7c7c"/><rect x="1" y="9" width="6" height="1.2" fill="#7c7c7c"/></svg>
<div class="t" style="left:200px;top:264.84px;font-size:12px;">124</div>
<div class="t" style="left:396px;top:262.84px;font-size:12px;color:#800080;letter-spacing:0.5px">124124</div>
<div class="t" style="left:510px;top:262.84px;font-size:12px;color:#800080;letter-spacing:0.2px">Maisner</div>
<div class="t" style="left:746px;top:264.84px;font-size:12px;letter-spacing:0.4px">Profil</div>
<div class="abs" style="left:821px;top:258px;width:226px;height:24px;background:#e6e6e6;border:1px solid #a9a9ab"></div>
<div class="abs" style="left:1032px;top:258px;width:15px;height:24px;background:#a0a0a0;border:1px solid #8b8b8b"></div>
<svg style="left:1036px;top:264px" width="8" height="11" viewBox="0 0 8 11"><path d="M4 0.5 V6" stroke="#7c7c7c" stroke-width="2.2"/><path d="M0.8 4.5 H7.2 L4 8 Z" fill="#7c7c7c"/><rect x="1" y="9" width="6" height="1.2" fill="#7c7c7c"/></svg>
<div class="t" style="left:84px;top:314.84px;font-size:12px;letter-spacing:0.4px">Třída</div>
<div class="abs" style="left:184px;top:308px;width:326px;height:24px;background:#fff;border:1px solid #a9a9b0"></div>
<svg style="left:496px;top:317px" width="10" height="7" viewBox="0 0 10 7"><path d="M0.9 0.9 L5 5.2 L9.1 0.9" fill="none" stroke="#ababab" stroke-width="1.6"/></svg>
<div class="t" style="left:188px;top:314.84px;font-size:12px;color:#3a3a3a;letter-spacing:0.43px">lqo - Objednávky</div>
<div class="t" style="left:84px;top:339.84px;font-size:12px;letter-spacing:0.4px">Objekt</div>
<div class="abs" style="left:184px;top:333px;width:326px;height:24px;background:#fff;border:1px solid #a9a9b0"></div>
<svg style="left:496px;top:342px" width="10" height="7" viewBox="0 0 10 7"><path d="M0.9 0.9 L5 5.2 L9.1 0.9" fill="none" stroke="#ababab" stroke-width="1.6"/></svg>
<div class="t" style="left:190px;top:339.84px;font-size:12px;letter-spacing:0.57px">misto - místo</div>
<div class="t" style="left:311.5px;top:339.84px;font-size:12px;letter-spacing:0.36px">číselný údaj</div>
<div class="t" style="left:746px;top:314.84px;font-size:12px;letter-spacing:0.4px">Zákaz</div>
<div class="abs" style="left:821px;top:308px;width:264px;height:24px;background:#fff;border:1px solid #a9a9b0"></div>
<svg style="left:1071px;top:317px" width="10" height="7" viewBox="0 0 10 7"><path d="M0.9 0.9 L5 5.2 L9.1 0.9" fill="none" stroke="#ababab" stroke-width="1.6"/></svg>
<div class="t" style="left:71px;top:414.84px;font-size:12px;letter-spacing:0.2px">Číselné údaje</div>
<div class="t" style="left:421px;top:414.84px;font-size:12px;letter-spacing:0.4px">Znakové údaje</div>
<div class="t" style="left:858px;top:414.84px;font-size:12px;letter-spacing:0.2px">Desetinná čísla</div>
<div class="t" style="left:71px;top:464.84px;font-size:12px;letter-spacing:0.2px">Objekt<span class=I>I</span> 1</div>
<div class="abs" style="left:171px;top:458px;width:164px;height:24px;background:#e6e6e6;border:1px solid #a9a9ab"></div>
<div class="abs" style="left:320px;top:458px;width:15px;height:24px;background:#a0a0a0;border:1px solid #8b8b8b"></div>
<svg style="left:324px;top:464px" width="8" height="11" viewBox="0 0 8 11"><path d="M4 0.5 V6" stroke="#7c7c7c" stroke-width="2.2"/><path d="M0.8 4.5 H7.2 L4 8 Z" fill="#7c7c7c"/><rect x="1" y="9" width="6" height="1.2" fill="#7c7c7c"/></svg>
<div class="t" style="right:902px;top:464.84px;font-size:12px;letter-spacing:0.3px">201</div>
<div class="t" style="left:421px;top:464.84px;font-size:12px;letter-spacing:0.3px">ObjektC 1</div>
<div class="abs" style="left:534px;top:458px;width:226px;height:24px;background:#e6e6e6;border:1px solid #a9a9ab"></div>
<div class="abs" style="left:745px;top:458px;width:15px;height:24px;background:#a0a0a0;border:1px solid #8b8b8b"></div>
<svg style="left:749px;top:464px" width="8" height="11" viewBox="0 0 8 11"><path d="M4 0.5 V6" stroke="#7c7c7c" stroke-width="2.2"/><path d="M0.8 4.5 H7.2 L4 8 Z" fill="#7c7c7c"/><rect x="1" y="9" width="6" height="1.2" fill="#7c7c7c"/></svg>
<div class="t" style="left:858px;top:464.84px;font-size:12px;letter-spacing:0.3px">ObjektD 1</div>
<div class="abs" style="left:971px;top:458px;width:151px;height:24px;background:#e6e6e6;border:1px solid #a9a9ab"></div>
<div class="abs" style="left:1107px;top:458px;width:15px;height:24px;background:#a0a0a0;border:1px solid #8b8b8b"></div>
<svg style="left:1111px;top:464px" width="8" height="11" viewBox="0 0 8 11"><path d="M4 0.5 V6" stroke="#7c7c7c" stroke-width="2.2"/><path d="M0.8 4.5 H7.2 L4 8 Z" fill="#7c7c7c"/><rect x="1" y="9" width="6" height="1.2" fill="#7c7c7c"/></svg>
<div class="t" style="right:115px;top:464.84px;font-size:12px;letter-spacing:0.3px">0</div>
<div class="t" style="left:71px;top:489.84px;font-size:12px;letter-spacing:0.2px">Objekt<span class=I>I</span> 2</div>
<div class="abs" style="left:171px;top:483px;width:164px;height:24px;background:#e6e6e6;border:1px solid #a9a9ab"></div>
<div class="abs" style="left:320px;top:483px;width:15px;height:24px;background:#a0a0a0;border:1px solid #8b8b8b"></div>
<svg style="left:324px;top:489px" width="8" height="11" viewBox="0 0 8 11"><path d="M4 0.5 V6" stroke="#7c7c7c" stroke-width="2.2"/><path d="M0.8 4.5 H7.2 L4 8 Z" fill="#7c7c7c"/><rect x="1" y="9" width="6" height="1.2" fill="#7c7c7c"/></svg>
<div class="t" style="right:902px;top:489.84px;font-size:12px;letter-spacing:0.3px">202</div>
<div class="t" style="left:421px;top:489.84px;font-size:12px;letter-spacing:0.3px">ObjektC 2</div>
<div class="abs" style="left:534px;top:483px;width:226px;height:24px;background:#e6e6e6;border:1px solid #a9a9ab"></div>
<div class="abs" style="left:745px;top:483px;width:15px;height:24px;background:#a0a0a0;border:1px solid #8b8b8b"></div>
<svg style="left:749px;top:489px" width="8" height="11" viewBox="0 0 8 11"><path d="M4 0.5 V6" stroke="#7c7c7c" stroke-width="2.2"/><path d="M0.8 4.5 H7.2 L4 8 Z" fill="#7c7c7c"/><rect x="1" y="9" width="6" height="1.2" fill="#7c7c7c"/></svg>
<div class="t" style="left:858px;top:489.84px;font-size:12px;letter-spacing:0.3px">ObjektD 2</div>
<div class="abs" style="left:971px;top:483px;width:151px;height:24px;background:#e6e6e6;border:1px solid #a9a9ab"></div>
<div class="abs" style="left:1107px;top:483px;width:15px;height:24px;background:#a0a0a0;border:1px solid #8b8b8b"></div>
<svg style="left:1111px;top:489px" width="8" height="11" viewBox="0 0 8 11"><path d="M4 0.5 V6" stroke="#7c7c7c" stroke-width="2.2"/><path d="M0.8 4.5 H7.2 L4 8 Z" fill="#7c7c7c"/><rect x="1" y="9" width="6" height="1.2" fill="#7c7c7c"/></svg>
<div class="t" style="right:115px;top:489.84px;font-size:12px;letter-spacing:0.3px">0</div>
<div class="t" style="left:71px;top:514.84px;font-size:12px;letter-spacing:0.2px">Objekt<span class=I>I</span> 3</div>
<div class="abs" style="left:171px;top:508px;width:164px;height:24px;background:#e6e6e6;border:1px solid #a9a9ab"></div>
<div class="abs" style="left:320px;top:508px;width:15px;height:24px;background:#a0a0a0;border:1px solid #8b8b8b"></div>
<svg style="left:324px;top:514px" width="8" height="11" viewBox="0 0 8 11"><path d="M4 0.5 V6" stroke="#7c7c7c" stroke-width="2.2"/><path d="M0.8 4.5 H7.2 L4 8 Z" fill="#7c7c7c"/><rect x="1" y="9" width="6" height="1.2" fill="#7c7c7c"/></svg>
<div class="t" style="right:902px;top:514.84px;font-size:12px;letter-spacing:0.3px">203</div>
<div class="t" style="left:421px;top:514.84px;font-size:12px;letter-spacing:0.3px">ObjektC 3</div>
<div class="abs" style="left:534px;top:508px;width:226px;height:24px;background:#e6e6e6;border:1px solid #a9a9ab"></div>
<div class="abs" style="left:745px;top:508px;width:15px;height:24px;background:#a0a0a0;border:1px solid #8b8b8b"></div>
<svg style="left:749px;top:514px" width="8" height="11" viewBox="0 0 8 11"><path d="M4 0.5 V6" stroke="#7c7c7c" stroke-width="2.2"/><path d="M0.8 4.5 H7.2 L4 8 Z" fill="#7c7c7c"/><rect x="1" y="9" width="6" height="1.2" fill="#7c7c7c"/></svg>
<div class="t" style="left:858px;top:514.84px;font-size:12px;letter-spacing:0.3px">ObjektD 3</div>
<div class="abs" style="left:971px;top:508px;width:151px;height:24px;background:#e6e6e6;border:1px solid #a9a9ab"></div>
<div class="abs" style="left:1107px;top:508px;width:15px;height:24px;background:#a0a0a0;border:1px solid #8b8b8b"></div>
<svg style="left:1111px;top:514px" width="8" height="11" viewBox="0 0 8 11"><path d="M4 0.5 V6" stroke="#7c7c7c" stroke-width="2.2"/><path d="M0.8 4.5 H7.2 L4 8 Z" fill="#7c7c7c"/><rect x="1" y="9" width="6" height="1.2" fill="#7c7c7c"/></svg>
<div class="t" style="right:115px;top:514.84px;font-size:12px;letter-spacing:0.3px">0</div>
<div class="t" style="left:71px;top:539.84px;font-size:12px;letter-spacing:0.2px">Objekt<span class=I>I</span> 4</div>
<div class="abs" style="left:171px;top:533px;width:164px;height:24px;background:#e6e6e6;border:1px solid #a9a9ab"></div>
<div class="abs" style="left:320px;top:533px;width:15px;height:24px;background:#a0a0a0;border:1px solid #8b8b8b"></div>
<svg style="left:324px;top:539px" width="8" height="11" viewBox="0 0 8 11"><path d="M4 0.5 V6" stroke="#7c7c7c" stroke-width="2.2"/><path d="M0.8 4.5 H7.2 L4 8 Z" fill="#7c7c7c"/><rect x="1" y="9" width="6" height="1.2" fill="#7c7c7c"/></svg>
<div class="t" style="right:902px;top:539.84px;font-size:12px;letter-spacing:0.3px">0</div>
<div class="t" style="left:421px;top:539.84px;font-size:12px;letter-spacing:0.3px">ObjektC 4</div>
<div class="abs" style="left:534px;top:533px;width:226px;height:24px;background:#e6e6e6;border:1px solid #a9a9ab"></div>
<div class="abs" style="left:745px;top:533px;width:15px;height:24px;background:#a0a0a0;border:1px solid #8b8b8b"></div>
<svg style="left:749px;top:539px" width="8" height="11" viewBox="0 0 8 11"><path d="M4 0.5 V6" stroke="#7c7c7c" stroke-width="2.2"/><path d="M0.8 4.5 H7.2 L4 8 Z" fill="#7c7c7c"/><rect x="1" y="9" width="6" height="1.2" fill="#7c7c7c"/></svg>
<div class="t" style="left:858px;top:539.84px;font-size:12px;letter-spacing:0.3px">ObjektD 4</div>
<div class="abs" style="left:971px;top:533px;width:151px;height:24px;background:#e6e6e6;border:1px solid #a9a9ab"></div>
<div class="abs" style="left:1107px;top:533px;width:15px;height:24px;background:#a0a0a0;border:1px solid #8b8b8b"></div>
<svg style="left:1111px;top:539px" width="8" height="11" viewBox="0 0 8 11"><path d="M4 0.5 V6" stroke="#7c7c7c" stroke-width="2.2"/><path d="M0.8 4.5 H7.2 L4 8 Z" fill="#7c7c7c"/><rect x="1" y="9" width="6" height="1.2" fill="#7c7c7c"/></svg>
<div class="t" style="right:115px;top:539.84px;font-size:12px;letter-spacing:0.3px">0</div>
<div class="t" style="left:71px;top:564.84px;font-size:12px;letter-spacing:0.2px">Objekt<span class=I>I</span> 5</div>
<div class="abs" style="left:171px;top:558px;width:164px;height:24px;background:#e6e6e6;border:1px solid #a9a9ab"></div>
<div class="abs" style="left:320px;top:558px;width:15px;height:24px;background:#a0a0a0;border:1px solid #8b8b8b"></div>
<svg style="left:324px;top:564px" width="8" height="11" viewBox="0 0 8 11"><path d="M4 0.5 V6" stroke="#7c7c7c" stroke-width="2.2"/><path d="M0.8 4.5 H7.2 L4 8 Z" fill="#7c7c7c"/><rect x="1" y="9" width="6" height="1.2" fill="#7c7c7c"/></svg>
<div class="t" style="right:902px;top:564.84px;font-size:12px;letter-spacing:0.3px">0</div>
<div class="t" style="left:421px;top:564.84px;font-size:12px;letter-spacing:0.3px">ObjektC 5</div>
<div class="abs" style="left:534px;top:558px;width:226px;height:24px;background:#e6e6e6;border:1px solid #a9a9ab"></div>
<div class="abs" style="left:745px;top:558px;width:15px;height:24px;background:#a0a0a0;border:1px solid #8b8b8b"></div>
<svg style="left:749px;top:564px" width="8" height="11" viewBox="0 0 8 11"><path d="M4 0.5 V6" stroke="#7c7c7c" stroke-width="2.2"/><path d="M0.8 4.5 H7.2 L4 8 Z" fill="#7c7c7c"/><rect x="1" y="9" width="6" height="1.2" fill="#7c7c7c"/></svg>
<div class="t" style="left:858px;top:564.84px;font-size:12px;letter-spacing:0.3px">ObjektD 5</div>
<div class="abs" style="left:971px;top:558px;width:151px;height:24px;background:#e6e6e6;border:1px solid #a9a9ab"></div>
<div class="abs" style="left:1107px;top:558px;width:15px;height:24px;background:#a0a0a0;border:1px solid #8b8b8b"></div>
<svg style="left:1111px;top:564px" width="8" height="11" viewBox="0 0 8 11"><path d="M4 0.5 V6" stroke="#7c7c7c" stroke-width="2.2"/><path d="M0.8 4.5 H7.2 L4 8 Z" fill="#7c7c7c"/><rect x="1" y="9" width="6" height="1.2" fill="#7c7c7c"/></svg>
<div class="t" style="right:115px;top:564.84px;font-size:12px;letter-spacing:0.3px">0</div>
<div class="t" style="left:71px;top:589.84px;font-size:12px;letter-spacing:0.2px">Objekt<span class=I>I</span> 6</div>
<div class="abs" style="left:171px;top:583px;width:164px;height:24px;background:#e6e6e6;border:1px solid #a9a9ab"></div>
<div class="abs" style="left:320px;top:583px;width:15px;height:24px;background:#a0a0a0;border:1px solid #8b8b8b"></div>
<svg style="left:324px;top:589px" width="8" height="11" viewBox="0 0 8 11"><path d="M4 0.5 V6" stroke="#7c7c7c" stroke-width="2.2"/><path d="M0.8 4.5 H7.2 L4 8 Z" fill="#7c7c7c"/><rect x="1" y="9" width="6" height="1.2" fill="#7c7c7c"/></svg>
<div class="t" style="right:902px;top:589.84px;font-size:12px;letter-spacing:0.3px">0</div>
<div class="t" style="left:421px;top:589.84px;font-size:12px;letter-spacing:0.3px">ObjektC 6</div>
<div class="abs" style="left:534px;top:583px;width:226px;height:24px;background:#e6e6e6;border:1px solid #a9a9ab"></div>
<div class="abs" style="left:745px;top:583px;width:15px;height:24px;background:#a0a0a0;border:1px solid #8b8b8b"></div>
<svg style="left:749px;top:589px" width="8" height="11" viewBox="0 0 8 11"><path d="M4 0.5 V6" stroke="#7c7c7c" stroke-width="2.2"/><path d="M0.8 4.5 H7.2 L4 8 Z" fill="#7c7c7c"/><rect x="1" y="9" width="6" height="1.2" fill="#7c7c7c"/></svg>
<div class="t" style="left:858px;top:589.84px;font-size:12px;letter-spacing:0.3px">ObjektD 6</div>
<div class="abs" style="left:971px;top:583px;width:151px;height:24px;background:#e6e6e6;border:1px solid #a9a9ab"></div>
<div class="abs" style="left:1107px;top:583px;width:15px;height:24px;background:#a0a0a0;border:1px solid #8b8b8b"></div>
<svg style="left:1111px;top:589px" width="8" height="11" viewBox="0 0 8 11"><path d="M4 0.5 V6" stroke="#7c7c7c" stroke-width="2.2"/><path d="M0.8 4.5 H7.2 L4 8 Z" fill="#7c7c7c"/><rect x="1" y="9" width="6" height="1.2" fill="#7c7c7c"/></svg>
<div class="t" style="right:115px;top:589.84px;font-size:12px;letter-spacing:0.3px">0</div>
<div class="t" style="left:71px;top:614.84px;font-size:12px;letter-spacing:0.2px">Objekt<span class=I>I</span> 7</div>
<div class="abs" style="left:171px;top:608px;width:164px;height:24px;background:#e6e6e6;border:1px solid #a9a9ab"></div>
<div class="abs" style="left:320px;top:608px;width:15px;height:24px;background:#a0a0a0;border:1px solid #8b8b8b"></div>
<svg style="left:324px;top:614px" width="8" height="11" viewBox="0 0 8 11"><path d="M4 0.5 V6" stroke="#7c7c7c" stroke-width="2.2"/><path d="M0.8 4.5 H7.2 L4 8 Z" fill="#7c7c7c"/><rect x="1" y="9" width="6" height="1.2" fill="#7c7c7c"/></svg>
<div class="t" style="right:902px;top:614.84px;font-size:12px;letter-spacing:0.3px">0</div>
<div class="t" style="left:421px;top:614.84px;font-size:12px;letter-spacing:0.3px">ObjektC 7</div>
<div class="abs" style="left:534px;top:608px;width:226px;height:24px;background:#e6e6e6;border:1px solid #a9a9ab"></div>
<div class="abs" style="left:745px;top:608px;width:15px;height:24px;background:#a0a0a0;border:1px solid #8b8b8b"></div>
<svg style="left:749px;top:614px" width="8" height="11" viewBox="0 0 8 11"><path d="M4 0.5 V6" stroke="#7c7c7c" stroke-width="2.2"/><path d="M0.8 4.5 H7.2 L4 8 Z" fill="#7c7c7c"/><rect x="1" y="9" width="6" height="1.2" fill="#7c7c7c"/></svg>
<div class="t" style="left:858px;top:614.84px;font-size:12px;letter-spacing:0.3px">ObjektD 7</div>
<div class="abs" style="left:971px;top:608px;width:151px;height:24px;background:#e6e6e6;border:1px solid #a9a9ab"></div>
<div class="abs" style="left:1107px;top:608px;width:15px;height:24px;background:#a0a0a0;border:1px solid #8b8b8b"></div>
<svg style="left:1111px;top:614px" width="8" height="11" viewBox="0 0 8 11"><path d="M4 0.5 V6" stroke="#7c7c7c" stroke-width="2.2"/><path d="M0.8 4.5 H7.2 L4 8 Z" fill="#7c7c7c"/><rect x="1" y="9" width="6" height="1.2" fill="#7c7c7c"/></svg>
<div class="t" style="right:115px;top:614.84px;font-size:12px;letter-spacing:0.3px">0</div>
<div class="t" style="left:71px;top:639.84px;font-size:12px;letter-spacing:0.2px">Objekt<span class=I>I</span> 8</div>
<div class="abs" style="left:171px;top:633px;width:164px;height:24px;background:#e6e6e6;border:1px solid #a9a9ab"></div>
<div class="abs" style="left:320px;top:633px;width:15px;height:24px;background:#a0a0a0;border:1px solid #8b8b8b"></div>
<svg style="left:324px;top:639px" width="8" height="11" viewBox="0 0 8 11"><path d="M4 0.5 V6" stroke="#7c7c7c" stroke-width="2.2"/><path d="M0.8 4.5 H7.2 L4 8 Z" fill="#7c7c7c"/><rect x="1" y="9" width="6" height="1.2" fill="#7c7c7c"/></svg>
<div class="t" style="right:902px;top:639.84px;font-size:12px;letter-spacing:0.3px">0</div>
<div class="t" style="left:421px;top:639.84px;font-size:12px;letter-spacing:0.3px">ObjektC 8</div>
<div class="abs" style="left:534px;top:633px;width:226px;height:24px;background:#e6e6e6;border:1px solid #a9a9ab"></div>
<div class="abs" style="left:745px;top:633px;width:15px;height:24px;background:#a0a0a0;border:1px solid #8b8b8b"></div>
<svg style="left:749px;top:639px" width="8" height="11" viewBox="0 0 8 11"><path d="M4 0.5 V6" stroke="#7c7c7c" stroke-width="2.2"/><path d="M0.8 4.5 H7.2 L4 8 Z" fill="#7c7c7c"/><rect x="1" y="9" width="6" height="1.2" fill="#7c7c7c"/></svg>
<div class="t" style="left:858px;top:639.84px;font-size:12px;letter-spacing:0.3px">ObjektD 8</div>
<div class="abs" style="left:971px;top:633px;width:151px;height:24px;background:#e6e6e6;border:1px solid #a9a9ab"></div>
<div class="abs" style="left:1107px;top:633px;width:15px;height:24px;background:#a0a0a0;border:1px solid #8b8b8b"></div>
<svg style="left:1111px;top:639px" width="8" height="11" viewBox="0 0 8 11"><path d="M4 0.5 V6" stroke="#7c7c7c" stroke-width="2.2"/><path d="M0.8 4.5 H7.2 L4 8 Z" fill="#7c7c7c"/><rect x="1" y="9" width="6" height="1.2" fill="#7c7c7c"/></svg>
<div class="t" style="right:115px;top:639.84px;font-size:12px;letter-spacing:0.3px">0</div>
<div class="t" style="left:71px;top:664.84px;font-size:12px;letter-spacing:0.2px">Objekt<span class=I>I</span> 9</div>
<div class="abs" style="left:171px;top:658px;width:164px;height:24px;background:#e6e6e6;border:1px solid #a9a9ab"></div>
<div class="abs" style="left:320px;top:658px;width:15px;height:24px;background:#a0a0a0;border:1px solid #8b8b8b"></div>
<svg style="left:324px;top:664px" width="8" height="11" viewBox="0 0 8 11"><path d="M4 0.5 V6" stroke="#7c7c7c" stroke-width="2.2"/><path d="M0.8 4.5 H7.2 L4 8 Z" fill="#7c7c7c"/><rect x="1" y="9" width="6" height="1.2" fill="#7c7c7c"/></svg>
<div class="t" style="right:902px;top:664.84px;font-size:12px;letter-spacing:0.3px">0</div>
<div class="t" style="left:421px;top:664.84px;font-size:12px;letter-spacing:0.3px">ObjektC 9</div>
<div class="abs" style="left:534px;top:658px;width:226px;height:24px;background:#e6e6e6;border:1px solid #a9a9ab"></div>
<div class="abs" style="left:745px;top:658px;width:15px;height:24px;background:#a0a0a0;border:1px solid #8b8b8b"></div>
<svg style="left:749px;top:664px" width="8" height="11" viewBox="0 0 8 11"><path d="M4 0.5 V6" stroke="#7c7c7c" stroke-width="2.2"/><path d="M0.8 4.5 H7.2 L4 8 Z" fill="#7c7c7c"/><rect x="1" y="9" width="6" height="1.2" fill="#7c7c7c"/></svg>
<div class="t" style="left:858px;top:664.84px;font-size:12px;letter-spacing:0.3px">ObjektD 9</div>
<div class="abs" style="left:971px;top:658px;width:151px;height:24px;background:#e6e6e6;border:1px solid #a9a9ab"></div>
<div class="abs" style="left:1107px;top:658px;width:15px;height:24px;background:#a0a0a0;border:1px solid #8b8b8b"></div>
<svg style="left:1111px;top:664px" width="8" height="11" viewBox="0 0 8 11"><path d="M4 0.5 V6" stroke="#7c7c7c" stroke-width="2.2"/><path d="M0.8 4.5 H7.2 L4 8 Z" fill="#7c7c7c"/><rect x="1" y="9" width="6" height="1.2" fill="#7c7c7c"/></svg>
<div class="t" style="right:115px;top:664.84px;font-size:12px;letter-spacing:0.3px">0</div>
<div class="t" style="left:71px;top:689.84px;font-size:12px;letter-spacing:0.2px">Objekt<span class=I>I</span> 10</div>
<div class="abs" style="left:171px;top:683px;width:164px;height:24px;background:#e6e6e6;border:1px solid #a9a9ab"></div>
<div class="abs" style="left:320px;top:683px;width:15px;height:24px;background:#a0a0a0;border:1px solid #8b8b8b"></div>
<svg style="left:324px;top:689px" width="8" height="11" viewBox="0 0 8 11"><path d="M4 0.5 V6" stroke="#7c7c7c" stroke-width="2.2"/><path d="M0.8 4.5 H7.2 L4 8 Z" fill="#7c7c7c"/><rect x="1" y="9" width="6" height="1.2" fill="#7c7c7c"/></svg>
<div class="t" style="right:902px;top:689.84px;font-size:12px;letter-spacing:0.3px">0</div>
<div class="t" style="left:421px;top:689.84px;font-size:12px;letter-spacing:0.3px">ObjektC 10</div>
<div class="abs" style="left:534px;top:683px;width:226px;height:24px;background:#e6e6e6;border:1px solid #a9a9ab"></div>
<div class="abs" style="left:745px;top:683px;width:15px;height:24px;background:#a0a0a0;border:1px solid #8b8b8b"></div>
<svg style="left:749px;top:689px" width="8" height="11" viewBox="0 0 8 11"><path d="M4 0.5 V6" stroke="#7c7c7c" stroke-width="2.2"/><path d="M0.8 4.5 H7.2 L4 8 Z" fill="#7c7c7c"/><rect x="1" y="9" width="6" height="1.2" fill="#7c7c7c"/></svg>
<div class="t" style="left:858px;top:689.84px;font-size:12px;letter-spacing:0.3px">ObjektD 10</div>
<div class="abs" style="left:971px;top:683px;width:151px;height:24px;background:#e6e6e6;border:1px solid #a9a9ab"></div>
<div class="abs" style="left:1107px;top:683px;width:15px;height:24px;background:#a0a0a0;border:1px solid #8b8b8b"></div>
<svg style="left:1111px;top:689px" width="8" height="11" viewBox="0 0 8 11"><path d="M4 0.5 V6" stroke="#7c7c7c" stroke-width="2.2"/><path d="M0.8 4.5 H7.2 L4 8 Z" fill="#7c7c7c"/><rect x="1" y="9" width="6" height="1.2" fill="#7c7c7c"/></svg>
<div class="t" style="right:115px;top:689.84px;font-size:12px;letter-spacing:0.3px">0</div>
<div class="abs" style="left:3px;top:817px;width:1211px;height:21px;background:#f0f0f0"></div>
<div class="abs" style="left:3px;top:837px;width:1211px;height:1px;background:#c5d5e8"></div>
<div class="abs" style="left:122px;top:817px;width:1px;height:20px;background:#808080"></div>
<div class="abs" style="left:363px;top:817px;width:1px;height:20px;background:#808080"></div>
<div class="abs" style="left:402px;top:817px;width:1px;height:20px;background:#808080"></div>
<div class="abs" style="left:482px;top:817px;width:1px;height:20px;background:#808080"></div>
<div class="abs" style="left:722px;top:817px;width:1px;height:20px;background:#808080"></div>
<div class="t" style="left:7.2px;top:821.84px;font-size:12px;letter-spacing:0.65px">LoprobjWrapper</div>
<div class="t" style="left:127.4px;top:821.84px;font-size:12px;letter-spacing:0.7px">Loprobj(V)</div>
<div class="t" style="left:407.6px;top:821.84px;font-size:12px;letter-spacing:0.5px">14.10.2021</div>
<div class="abs" style="left:673px;top:818px;width:21px;height:18px;background:#dedede;border:1px solid #3c3c3c"></div>
<svg style="left:678px;top:822px" width="11" height="11" viewBox="0 0 11 11">
<rect x="0" y="0" width="11" height="11" fill="#4aa0f0"/><rect x="0" y="0" width="11" height="2" fill="#7cc0ff"/>
<rect x="3.3" y="1.8" width="3.8" height="7" rx="1.2" fill="#ddd" stroke="#111" stroke-width="1"/>
</svg>
<svg style="left:1200px;top:820px" width="13" height="13" viewBox="0 0 13 13">
<path d="M12.5 1.5 L1.5 12.5 M12.5 5.5 L5.5 12.5 M12.5 9.5 L9.5 12.5" stroke="#fff" stroke-width="1.2" transform="translate(0.8,0.8)"/>
<path d="M12 1 L1 12 M12 5 L5 12 M12 9 L9 12" stroke="#8c8c8c" stroke-width="1.4"/></svg></body></html>
